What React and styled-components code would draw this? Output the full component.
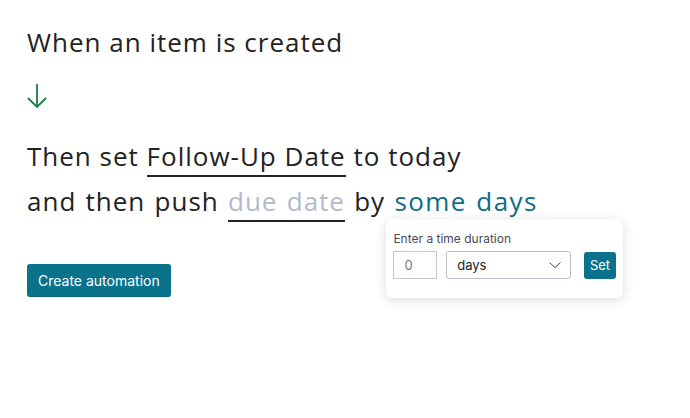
import React from "react";
import styled, { createGlobalStyle } from "styled-components";

const Global = createGlobalStyle`
  body {
    margin: 0;
    background: #ffffff;
    font-family: "Open Sans", sans-serif;
  }
`;

const App = () => {
    return (
        <>
            <Global />
            <Page>
                <Title>When an item is created</Title>
                <Arrow width="20" height="26" viewBox="0 0 20 26">
                    <path d="M10 1 L10 24 M1 15 L10 24 L19 15" fill="none" stroke="#1a7f45" strokeWidth="1.8" />
                </Arrow>
                <Sentence>
                    <Line>
                        Then set <Field>Follow-Up Date</Field> to today
                    </Line>
                    <Line wide>
                        and then push <Field muted>due date</Field> by{" "}
                        <Anchor>
                            <Field accent>some days</Field>
                            <Popover>
                                <Label>Enter a time duration</Label>
                                <Row>
                                    <NumberBox>0</NumberBox>
                                    <Select>
                                        days
                                        <svg width="14" height="8" viewBox="0 0 14 8">
                                            <path d="M1.5 1.5 L7 6.5 L12.5 1.5" fill="none" stroke="#444" strokeWidth="1" />
                                        </svg>
                                    </Select>
                                    <SetButton>Set</SetButton>
                                </Row>
                            </Popover>
                        </Anchor>
                    </Line>
                </Sentence>
                <Button>Create automation</Button>
            </Page>
        </>
    );
}

const Page = styled.div`
    padding: 24px 27px;
    display: flex;
    flex-direction: column;
    align-items: flex-start;
`
const Title = styled.div`
    font-size: 26px;
    line-height: 36px;
    letter-spacing: 1px;
    color: #222222;
`
const Arrow = styled.svg`
    margin-top: 23px;
`
const Sentence = styled.div`
    margin-top: 25px;
    font-size: 26px;
    letter-spacing: 1px;
    color: #222222;
`
const Line = styled.div`
    line-height: 45px;
    white-space: nowrap;
    word-spacing: ${p => p.wide ? "1.5px" : "0"};
`
const Field = styled.span`
    color: ${p => p.muted ? "#b3b9cc" : p.accent ? "#0b6e86" : "#222222"};
    letter-spacing: ${p => p.accent ? "1.4px" : "inherit"};
    border-bottom: 2px solid #222222;
    padding-bottom: 1px;
`
const Anchor = styled.span`
    position: relative;
`
const Popover = styled.div`
    position: absolute;
    left: -8px;
    top: 36px;
    width: 237px;
    box-sizing: border-box;
    padding: 12px 7px 19px;
    background: #ffffff;
    border-radius: 7px;
    box-shadow: 0 2px 12px rgba(0, 0, 0, 0.14);
    font-family: Inter, sans-serif;
    letter-spacing: 0;
    word-spacing: 0;
    line-height: normal;
    z-index: 2;
`
const Label = styled.div`
    font-size: 12px;
    color: #4a4a55;
    margin-bottom: 5px;
`
const Row = styled.div`
    display: flex;
    align-items: center;
`
const NumberBox = styled.div`
    width: 44px;
    height: 28px;
    box-sizing: border-box;
    border: 1px solid #c8c8cc;
    font-size: 13px;
    color: #777;
    display: flex;
    align-items: center;
    padding-left: 10px;
`
const Select = styled.div`
    margin-left: 9px;
    width: 125px;
    height: 28px;
    box-sizing: border-box;
    border: 1px solid #b9bdd0;
    border-radius: 3px;
    font-size: 13px;
    color: #222;
    display: flex;
    align-items: center;
    justify-content: space-between;
    padding: 0 8px 0 10px;
`
const SetButton = styled.div`
    margin-left: 13px;
    width: 33px;
    height: 27px;
    border-radius: 3px;
    background: #0b728b;
    color: #ffffff;
    font-size: 13px;
    display: flex;
    align-items: center;
    justify-content: center;
`
const Button = styled.div`
    margin-top: 40px;
    height: 33px;
    padding: 0 11px;
    display: flex;
    align-items: center;
    border-radius: 3px;
    background: #0b728b;
    color: #ffffff;
    font-family: Inter, sans-serif;
    font-size: 14px;
    box-shadow: inset 0 -1px 0 rgba(0, 0, 0, 0.15);
`

export default App;
